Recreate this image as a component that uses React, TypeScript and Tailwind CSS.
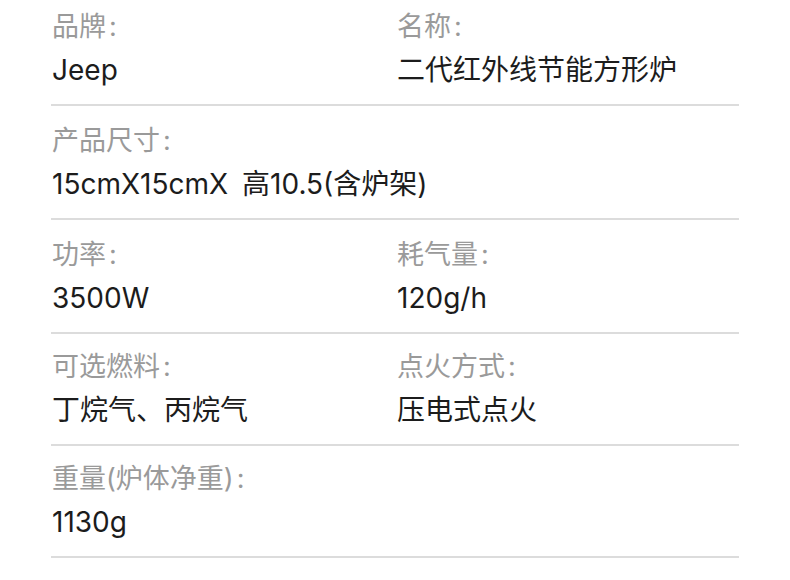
import React from "react";

type Cell = { label: string; value: string };
type Row = { cells: Cell[]; h: string };

const rows: Row[] = [
  { h: "h-[106px]", cells: [{ label: "品牌", value: "Jeep" }, { label: "名称", value: "二代红外线节能方形炉" }] },
  { h: "h-[114px]", cells: [{ label: "产品尺寸", value: "15cmX15cmX\u2002高10.5(含炉架)" }] },
  { h: "h-[114px]", cells: [{ label: "功率", value: "3500W" }, { label: "耗气量", value: "120g/h" }] },
  { h: "h-[112px]", cells: [{ label: "可选燃料", value: "丁烷气、丙烷气" }, { label: "点火方式", value: "压电式点火" }] },
  { h: "h-[112px]", cells: [{ label: "重量(炉体净重)", value: "1130g" }] },
];

export default function App() {
  return (
    <div
      className="w-[790px] h-[580px] bg-white overflow-hidden pl-[51px]"
      style={{ fontFamily: '"Inter", "Noto Sans CJK SC", sans-serif' }}
    >
      <div className="w-[688px] flex flex-col">
        {rows.map((r, i) => (
          <div
            key={i}
            className={`${r.h} border-b-2 border-[#dcdcdc] grid grid-cols-[345px_1fr] items-end pb-[14px]`}
          >
            {r.cells.map((c, j) => (
              <div key={j} className={`flex flex-col gap-[5px] pl-[1px] ${r.cells.length === 1 ? "col-span-2" : ""}`}>
                <div className="text-[27px] leading-[36px] text-[#9a9a9a] whitespace-nowrap">
                  {c.label}
                  <span className="ml-[3px]">:</span>
                </div>
                <div className="text-[28px] leading-[40px] text-[#1c1c1c] whitespace-nowrap">{c.value}</div>
              </div>
            ))}
          </div>
        ))}
      </div>
    </div>
  );
}
